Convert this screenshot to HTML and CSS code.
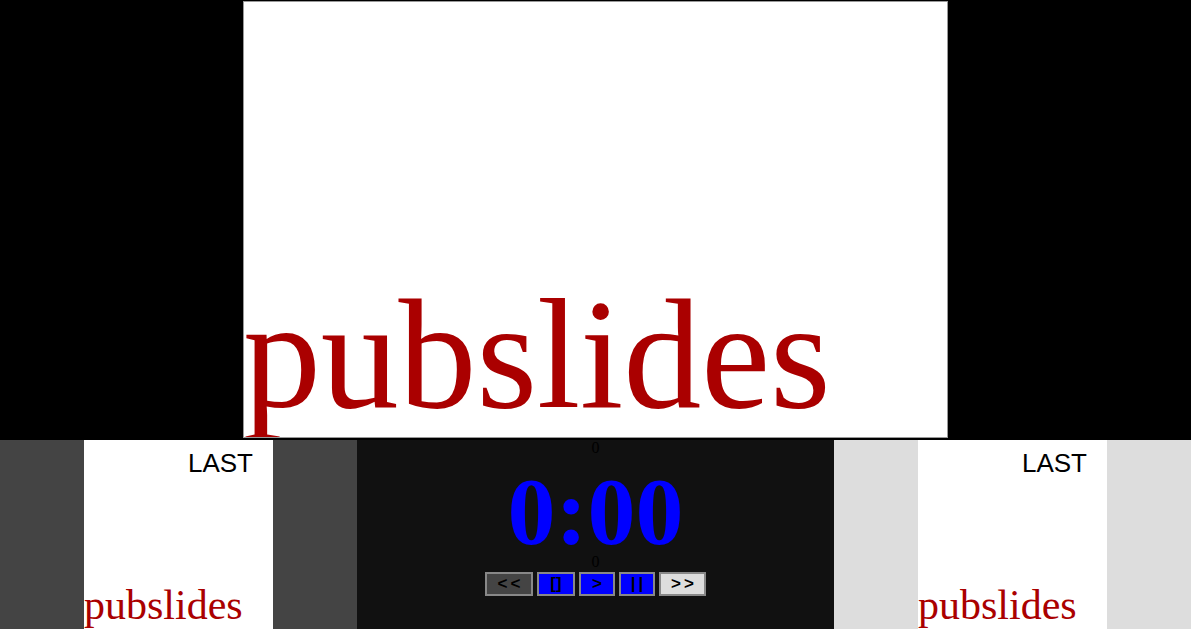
FILE: index.html
```html
<!DOCTYPE html>
<html>
<head>
<meta charset="utf-8">
<title>pubslides</title>
<link rel="stylesheet" href="styles.css">
</head>
<body>
<div class="stage">
  <div class="slide">
    <div class="slide-title">pubslides</div>
  </div>
</div>
<div class="deck">
  <div class="side side-prev">
    <div class="thumb">
      <div class="thumb-label">LAST</div>
      <div class="thumb-title">pubslides</div>
    </div>
  </div>
  <div class="center">
    <div class="counter">0</div>
    <div class="clock">0:00</div>
    <div class="counter counter-low">0</div>
    <div class="controls">
      <button class="btn btn-dark btn-wide spaced">&lt;&lt;</button>
      <button class="btn btn-blue btn-mid">[]</button>
      <button class="btn btn-blue btn-narrow">&gt;</button>
      <button class="btn btn-blue btn-narrow spaced">||</button>
      <button class="btn btn-light btn-wide2 spaced">&gt;&gt;</button>
    </div>
  </div>
  <div class="side side-next">
    <div class="thumb">
      <div class="thumb-label">LAST</div>
      <div class="thumb-title">pubslides</div>
    </div>
  </div>
</div>
</body>
</html>
```

FILE: styles.css
```css
html, body {
  margin: 0;
  padding: 0;
}
body {
  background: #000;
  height: 629px;
  overflow: hidden;
  font-family: "Liberation Serif", "Times New Roman", serif;
}
.stage {
  height: 440px;
  display: flex;
  justify-content: center;
  align-items: flex-start;
  padding-top: 1px;
  box-sizing: border-box;
}
.slide {
  width: 705px;
  height: 437px;
  box-sizing: border-box;
  border: 1px solid #999;
  background: #fff;
  overflow: hidden;
  padding-top: 275px;
}
.slide-title {
  font-family: "Liberation Serif", "Times New Roman", serif;
  font-size: 156px;
  line-height: 156px;
  color: #aa0000;
  white-space: nowrap;
  margin-left: -1px;
  letter-spacing: -0.2px;
}
.deck {
  display: flex;
  height: 189px;
}
.side {
  width: 357px;
  display: flex;
  justify-content: center;
  overflow: hidden;
}
.side-prev { background: #444; }
.side-next { background: #ddd; }
.thumb {
  width: 189px;
  height: 189px;
  background: #fff;
  overflow: hidden;
}
.thumb-label {
  font-family: "Liberation Sans", Arial, sans-serif;
  font-size: 26px;
  line-height: 30px;
  padding-top: 8px;
  padding-right: 20px;
  text-align: right;
  color: #000;
}
.thumb-title {
  font-family: "Liberation Serif", "Times New Roman", serif;
  font-size: 42px;
  line-height: 42px;
  color: #aa0000;
  margin-top: 106px;
  white-space: nowrap;
}
.center {
  width: 477px;
  background: #111;
  display: flex;
  flex-direction: column;
  align-items: center;
}
.counter {
  font-size: 16px;
  line-height: 16px;
  color: #000;
}
.counter-low {
  line-height: 14px;
}
.clock {
  font-family: "Liberation Serif", "Times New Roman", serif;
  font-weight: bold;
  font-size: 96px;
  line-height: 86px;
  color: #00f;
  margin-top: 13px;
}
.controls {
  display: flex;
  gap: 4px;
  margin-top: 3px;
}
.btn {
  height: 24px;
  box-sizing: border-box;
  border: 2px solid #888;
  padding: 0;
  font-family: "Liberation Sans", Arial, sans-serif;
  font-weight: bold;
  font-size: 17px;
  line-height: 20px;
  color: #000;
  text-align: center;
}
.spaced { letter-spacing: 3px; text-indent: 3px; }
.btn-dark { background: #444; }
.btn-blue { background: #00f; }
.btn-light { background: #ddd; }
.btn-wide { width: 48px; }
.btn-wide2 { width: 47px; }
.btn-mid { width: 38px; }
.btn-narrow { width: 36px; }
```
